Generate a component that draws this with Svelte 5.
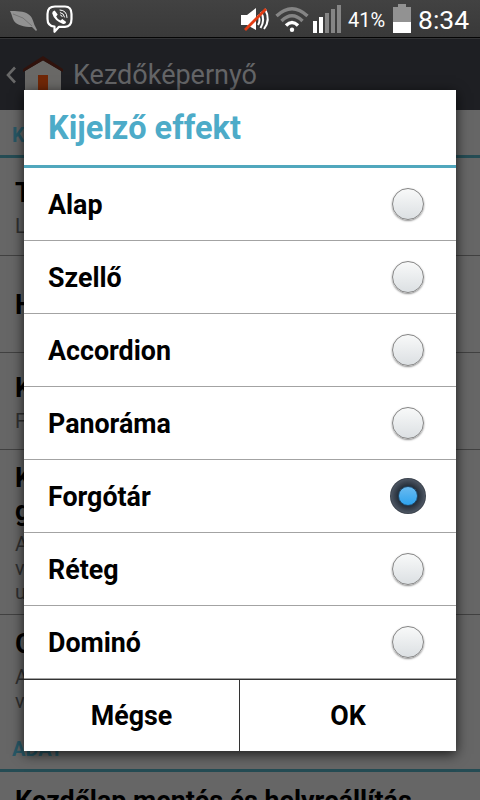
<script lang="ts">
  type Row = { title: string[], summary: string[], height: number }

  const effects = ['Alap', 'Szellő', 'Accordion', 'Panoráma', 'Forgótár', 'Réteg', 'Dominó']

  const settings: Row[] = [
    { title: ['T'], summary: ['L'], height: 98 },
    { title: ['H'], summary: [], height: 97 },
    { title: ['K'], summary: ['F'], height: 97 },
    { title: ['K', 'g'], summary: ['A', 'v', 'u'], height: 165 },
    { title: ['G'], summary: ['A', 'v'], height: 109 }
  ]

  let selected = $state('Forgótár')
</script>

<div class="screen">
  <header class="status-bar">
    <div class="notifications">
      <svg class="leaf" width="28" height="22" viewBox="0 0 28 22">
        <path d="M1 1C7 1 15 1 19 4C24 7 24 12 26 16L28 20L27 21L23 17C15 17 8 15 5 11C3 8 3 4 1 1Z" fill="#929292" />
        <path d="M4 4L14 8L23 16" fill="none" stroke="#6c6c6c" stroke-width=".8" />
      </svg>
      <svg class="viber" width="28" height="29" viewBox="0 0 28 29">
        <path d="M9 1.5H19Q25.5 1.5 25.5 9V14Q25.5 21.8 19 21.8H13L8.5 26.8V21.6Q1.5 21 1.5 14V9Q1.5 1.5 9 1.5Z" fill="none" stroke="#fff" stroke-width="2.2" stroke-linejoin="round" />
        <path d="M8.7 5.6L11.7 9.6L10.2 11.5Q11.5 14.5 14.5 15.6L16.3 14.1L20.2 17Q19.5 19.6 17 19Q8 15.5 6.2 8.3Q6.2 6.2 8.7 5.6Z" fill="#fff" />
        <path d="M14 5Q20.8 5.3 21 12.5M14.3 7.6Q18 8.2 18.5 12M14.6 10Q16 10.2 16.2 11.6" fill="none" stroke="#fff" stroke-width="1" stroke-linecap="round" />
      </svg>
    </div>
    <div class="indicators">
      <svg class="mute" width="30" height="26" viewBox="0 0 30 26">
        <path d="M0 8H6L15 1V23L6 18H0Z" fill="#fff" />
        <path d="M17 8Q20 13 17 18M20 5Q24.5 13 19.5 21M24 2Q30 13 23 22" fill="none" stroke="#fff" stroke-width="2" />
        <path d="M4 23L25 2" stroke="#e23c14" stroke-width="2.8" />
      </svg>
      <svg class="wifi" width="34" height="26" viewBox="0 0 34 26">
        <g fill="none" stroke-width="3.4">
          <path d="M1.5 9Q17-5.5 32.5 9M6.5 14Q17 3.5 27.5 14" stroke="#858585" />
          <path d="M11 18.5Q17 12.5 23 18.5" stroke="#fff" />
        </g>
        <circle cx="17" cy="22.8" r="2.2" fill="#fff" />
      </svg>
      <svg class="signal" width="28" height="28" viewBox="0 0 28 28">
        <path d="M0 16H4V28H0ZM6 12H10V28H6Z" fill="#fff" />
        <path d="M12 8H16V28H12ZM18 4H22V28H18ZM24 0H28V28H24Z" fill="#858585" />
      </svg>
      <span class="percent">41%</span>
      <svg class="battery" width="18" height="29" viewBox="0 0 18 29">
        <path d="M0 3H5V0H13V3H18V18H0Z" fill="#929292" />
        <path d="M0 18H18V29H0Z" fill="#fff" />
      </svg>
      <span class="clock">8:34</span>
    </div>
  </header>

  <div class="action-bar">
    <svg class="back" width="11" height="18" viewBox="0 0 11 18">
      <path d="M9 1.5L2 9L9 16.5" fill="none" stroke="#686868" stroke-width="2.6" />
    </svg>
    <svg class="home" width="40" height="40" viewBox="0 0 40 40">
      <path d="M2 13L20 2L38 13V40H2Z" fill="#696866" />
      <path d="M0 14V11L20-2L40 11V14L20 2.5Z" fill="#30120c" />
      <path d="M15 17H25V40H15Z" fill="#702707" />
    </svg>
    <span>Kezdőképernyő</span>
  </div>

  <main class="settings">
    <h2>K</h2>
    {#each settings as row}
      <div class="setting" style:height="{row.height}px">
        {#each row.title as line}<strong>{line}</strong>{/each}
        {#if row.summary.length}
          <div class="summary">
            {#each row.summary as line}<span>{line}</span>{/each}
          </div>
        {/if}
      </div>
    {/each}
    <h2>ADAT</h2>
    <div class="setting backup"><strong>Kezdőlap mentés és helyreállítás</strong></div>
  </main>

  <div class="dialog" role="dialog" aria-label="Kijelző effekt">
    <h1>Kijelző effekt</h1>
    <div class="options" role="radiogroup">
      {#each effects as effect}
        <button
          class="option"
          role="radio"
          aria-checked={selected === effect}
          onclick={() => (selected = effect)}
        >
          <span>{effect}</span>
          <i class="radio" class:checked={selected === effect}></i>
        </button>
      {/each}
    </div>
    <div class="actions">
      <button>Mégse</button>
      <button>OK</button>
    </div>
  </div>
</div>

<style>
  :global(body) {
    margin: 0;
    background: #666;
  }

  .screen {
    position: relative;
    display: flex;
    flex-direction: column;
    width: 480px;
    height: 800px;
    overflow: hidden;
    background: #666;
    font-family: Roboto, sans-serif;
  }

  h1,
  h2 {
    margin: 0;
  }

  svg {
    display: block;
    flex-shrink: 0;
    overflow: visible;
  }

  .status-bar {
    display: flex;
    justify-content: space-between;
    box-sizing: border-box;
    height: 38px;
    flex-shrink: 0;
    background: linear-gradient(#424242, #393939);
    border-bottom: 1px solid #050505;
    color: #fff;
  }

  .notifications,
  .indicators {
    display: flex;
    align-items: flex-start;
  }

  .leaf {
    margin: 10px 9px 0 9px;
  }

  .viber {
    margin-top: 5px;
  }

  .mute {
    margin: 7px 4px 0 0;
  }

  .wifi {
    margin: 7px 4px 0 0;
  }

  .signal {
    margin: 5px 7px 0 0;
  }

  .percent {
    width: 37px;
    margin-right: 8px;
    font-size: 20px;
    line-height: 40px;
  }

  .battery {
    margin: 4px 7px 0 0;
  }

  .clock {
    width: 62px;
    font-size: 26.5px;
    line-height: 40px;
  }

  .action-bar {
    display: flex;
    box-sizing: border-box;
    height: 72px;
    flex-shrink: 0;
    background: #1e1f23;
    border-top: 1px solid #333436;
    color: #646567;
    font-size: 27px;
    line-height: 72px;
  }

  .back {
    margin: 27px 6px 0 6px;
  }

  .home {
    margin: 19px 10px 0 0;
  }

  .settings h2 {
    box-sizing: border-box;
    height: 48px;
    padding-left: 12px;
    border-bottom: 3px solid #254c54;
    color: #285866;
    font-size: 20px;
    line-height: 50px;
  }

  .setting {
    display: flex;
    flex-direction: column;
    justify-content: center;
    box-sizing: border-box;
    padding: 2px 0 0 15px;
    border-bottom: 1px solid #414141;
  }

  .setting:nth-of-type(5) {
    border-bottom: 0;
  }

  .setting strong {
    color: #000;
    font-size: 26.8px;
    line-height: 33px;
    white-space: nowrap;
  }

  .summary {
    display: flex;
    flex-direction: column;
    margin-top: 4px;
    color: #303030;
    font-size: 20px;
    line-height: 24px;
  }

  .backup {
    justify-content: flex-start;
    padding-top: 13px;
    border-bottom: 0;
  }

  .dialog {
    position: absolute;
    top: 90px;
    left: 24px;
    display: flex;
    flex-direction: column;
    width: 432px;
    height: 661px;
    background: #fff;
    box-shadow: 0 3px 12px rgba(0, 0, 0, 0.75);
  }

  .dialog h1 {
    box-sizing: border-box;
    height: 78px;
    padding-left: 24px;
    border-bottom: 3px solid #50a7bd;
    color: #4dabc8;
    font-size: 32.5px;
    font-weight: 700;
    line-height: 77px;
  }

  button {
    padding: 0;
    border: 0;
    background: none;
    color: #000;
    font: 700 26.8px Roboto, sans-serif;
  }

  .option {
    display: flex;
    align-items: center;
    justify-content: space-between;
    box-sizing: border-box;
    width: 100%;
    height: 73px;
    padding: 0 30px 0 24px;
    border-bottom: 1px solid #a3a3a3;
  }

  .option span {
    padding-top: 2px;
  }

  .radio {
    box-sizing: border-box;
    width: 36px;
    height: 36px;
    border: 2px solid transparent;
    border-radius: 50%;
  }

  .radio::before {
    content: '';
    display: block;
    box-sizing: border-box;
    width: 32px;
    height: 32px;
    border: 1px solid #858585;
    border-radius: 50%;
    background: linear-gradient(#f8f9f9, #dce0e3);
    box-shadow: 0 1px 2px rgba(0, 0, 0, 0.45);
  }

  .radio.checked {
    border: 0;
    padding: 8px;
    background: radial-gradient(circle closest-side, #252e39 55%, #4a5360 92%, #343b44 100%);
  }

  .radio.checked::before {
    width: 20px;
    height: 20px;
    border: 1px solid #214969;
    background: linear-gradient(#69baf0, #2ea3ee);
    box-shadow: none;
  }

  .actions {
    display: flex;
    flex: 1;
    border-top: 1px solid #333;
  }

  .actions button {
    flex: 1;
    padding-top: 1px;
  }

  .actions button:first-child {
    flex: 0 0 216px;
    box-sizing: border-box;
    border-right: 1px solid #333;
  }
</style>
